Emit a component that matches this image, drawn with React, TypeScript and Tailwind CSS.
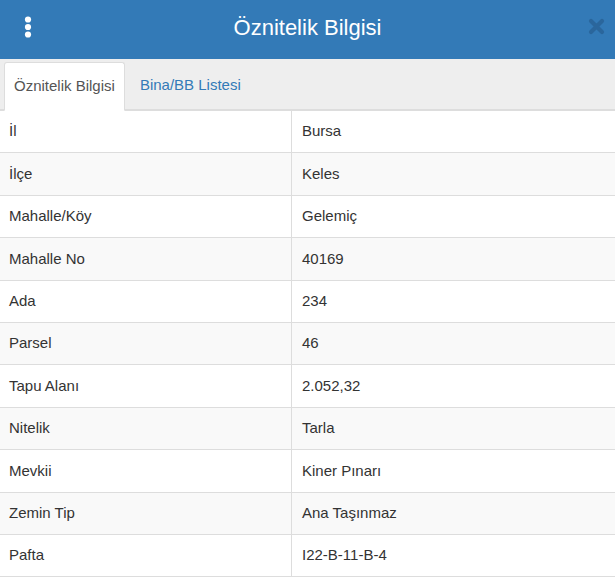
import { useState } from "react";

const ROWS: [string, string][] = [
  ["İl", "Bursa"],
  ["İlçe", "Keles"],
  ["Mahalle/Köy", "Gelemiç"],
  ["Mahalle No", "40169"],
  ["Ada", "234"],
  ["Parsel", "46"],
  ["Tapu Alanı", "2.052,32"],
  ["Nitelik", "Tarla"],
  ["Mevkii", "Kiner Pınarı"],
  ["Zemin Tip", "Ana Taşınmaz"],
  ["Pafta", "I22-B-11-B-4"],
];

function Kebab() {
  return (
    <svg width="8" height="24" viewBox="0 0 8 24" className="block">
      <circle cx="4" cy="4.5" r="3.1" fill="#fff" />
      <circle cx="4" cy="12" r="3.1" fill="#fff" />
      <circle cx="4" cy="19.5" r="3.1" fill="#fff" />
    </svg>
  );
}

function CloseIcon() {
  return (
    <svg width="17" height="17" viewBox="0 0 17 17" className="block">
      <path d="M3 3 L14 14 M14 3 L3 14" stroke="#2a669c" strokeWidth="4.2" strokeLinecap="round" />
    </svg>
  );
}

export default function App() {
  const [tab, setTab] = useState(0);

  return (
    <div className="w-[615px] h-[578px] overflow-hidden bg-white text-[#333] font-['Liberation_Sans',Arial,sans-serif]">
      {/* header */}
      <div className="relative h-[59px] bg-[#337ab7] flex items-center justify-center">
        <div className="absolute left-[24px] top-[15px]">
          <Kebab />
        </div>
        <h4 className="text-white text-[22px] leading-none -mt-[3px]">Öznitelik Bilgisi</h4>
        <button className="absolute right-[10px] top-[18px]">
          <CloseIcon />
        </button>
      </div>

      {/* tabs */}
      <div className="h-[52px] bg-[#eee] border-b-2 border-[#ddd] pt-[3px] pl-[4px] flex gap-[2px]">
        {["Öznitelik Bilgisi", "Bina/BB Listesi"].map((t, i) => (
          <button
            key={t}
            onClick={() => setTab(i)}
            className={
              tab === i
                ? "h-[49px] px-[9px] bg-white border border-[#ddd] border-b-white rounded-t-[3px] text-[15px] text-[#555] -mb-[2px]"
                : "h-[47px] px-[12px] border border-transparent text-[15px] text-[#337ab7]"
            }
          >
            {t}
          </button>
        ))}
      </div>

      {/* attribute table */}
      <div>
        {ROWS.map(([k, v], i) => (
          <div
            key={k}
            className={
              "grid grid-cols-[292px_1fr] h-[42.4px] border-b border-[#ddd] text-[15px] " +
              (i % 2 === 1 ? "bg-[#f9f9f9]" : "bg-white")
            }
          >
            <div className="flex items-center pl-[9px] border-r border-[#ddd]">{k}</div>
            <div className="flex items-center pl-[10px]">{v}</div>
          </div>
        ))}
      </div>
    </div>
  );
}
